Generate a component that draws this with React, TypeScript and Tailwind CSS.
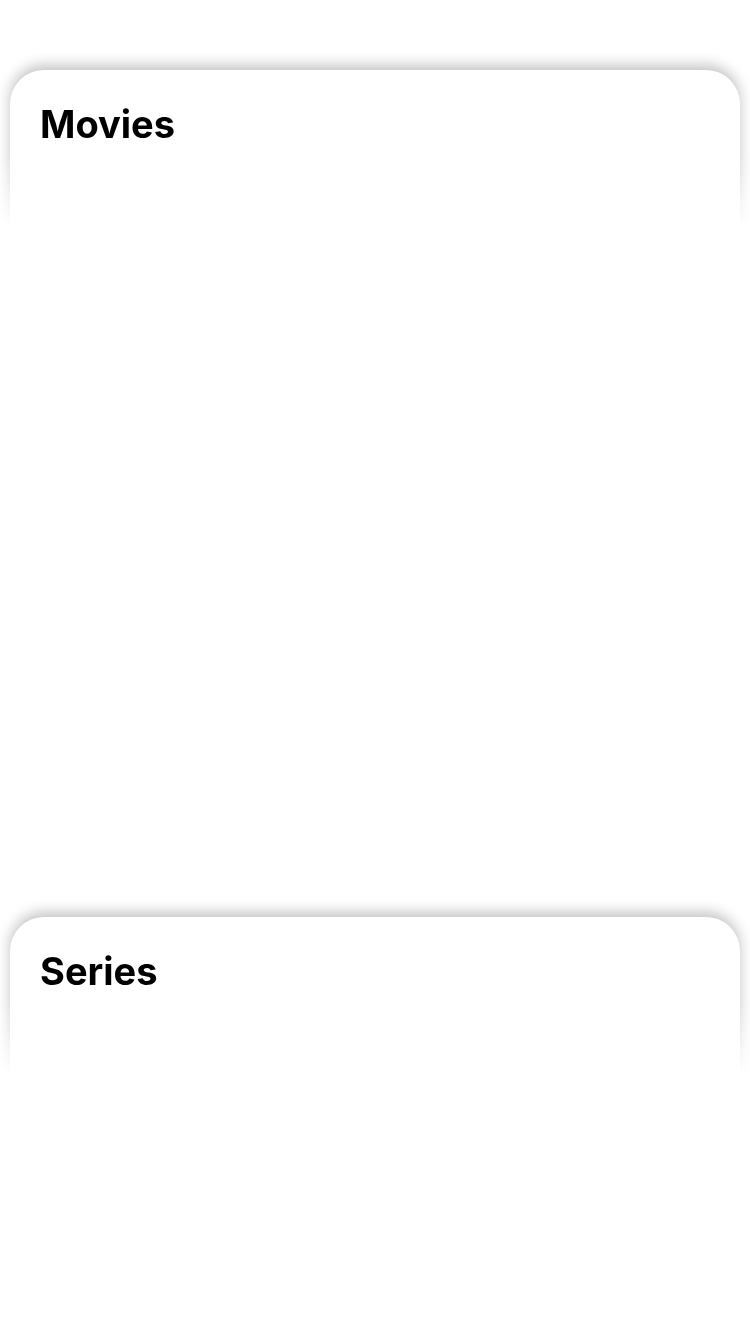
const sections = [
    { title: "Movies", height: "h-[687px]" },
    { title: "Series", height: "h-[260px]" },
]

const Section = ({ title, height }: { title: string; height: string }) => {
    return (
        <section>
            {/* clip the shadow at the card's bottom edge and fade it out */}
            <div className="-mx-[10px] -mt-[20px] overflow-hidden px-[10px] pt-[20px] [mask-image:linear-gradient(to_bottom,black_58%,transparent_100%)]">
                <div className="h-[160px] rounded-t-[34px] bg-white px-[30px] pt-[35px] shadow-[0_-5px_14px_rgba(0,0,0,0.24)]">
                    <h2 className="text-[38px] leading-none font-bold text-black">
                        {title}
                    </h2>
                </div>
            </div>
            <div className={height}></div>
        </section>
    )
}

export default function App() {
    return (
        <div
            className="min-h-screen bg-white px-[10px] pt-[70px]"
            style={{ fontFamily: "Inter, 'Noto Sans', sans-serif" }}
        >
            {sections.map((s) => (
                <Section key={s.title} title={s.title} height={s.height} />
            ))}
        </div>
    )
}
